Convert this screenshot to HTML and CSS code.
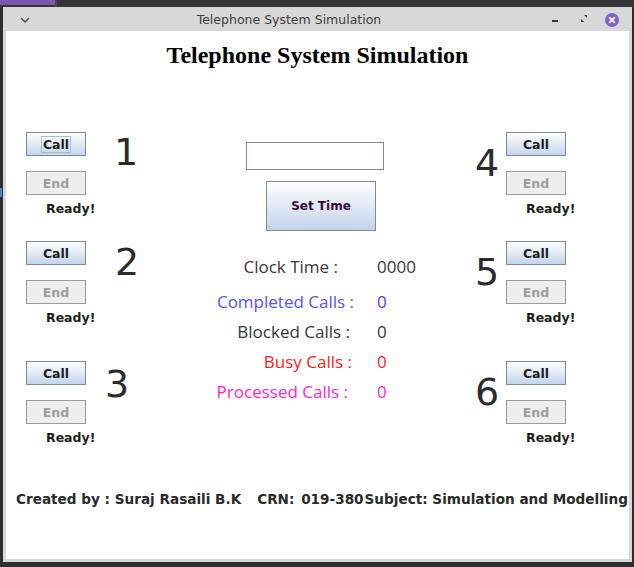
FILE: index.html
```html
<!DOCTYPE html>
<html>
<head>
<meta charset="utf-8">
<title>Telephone System Simulation</title>
<link rel="stylesheet" href="styles.css">
</head>
<body>
<div class="topbar"><div class="topbar-app"></div><div class="topbar-sep"></div></div>
<div class="desk">
  <div class="desk-edge"><div class="desk-icon"></div></div>
  <div class="window">
    <div class="titlebar">
      <div class="tb-menu">
        <svg width="10" height="6" viewBox="0 0 10 6"><path d="M1 1 L5 5 L9 1" fill="none" stroke="#4a4a4a" stroke-width="1.4"/></svg>
      </div>
      <div class="tb-title">Telephone System Simulation</div>
      <div class="tb-controls">
        <div class="tb-btn"><svg width="14" height="14" viewBox="0 0 14 14"><rect x="4" y="7" width="6" height="2" fill="#3a3a3a"/></svg></div>
        <div class="tb-btn tb-restore"><svg width="14" height="14" viewBox="0 0 14 14"><path d="M7 3 H10 V6 Z" fill="#3a3a3a"/><path d="M4 7 V10 H7 Z" fill="#3a3a3a"/></svg></div>
        <div class="tb-btn tb-close"><svg width="14" height="14" viewBox="0 0 14 14"><circle cx="7" cy="7" r="7" fill="#8062c8"/><path d="M4.6 4.6 L9.4 9.4 M9.4 4.6 L4.6 9.4" stroke="#fff" stroke-width="1.7" stroke-linecap="round"/></svg></div>
      </div>
    </div>
    <div class="content">
      <h1 class="heading">Telephone System Simulation</h1>
      <div class="main">
        <div class="col-left">
          <div class="phone">
            <div class="phone-btns">
              <div class="btn btn-call"><span class="focus">Call</span></div>
              <div class="btn btn-end">End</div>
              <div class="ready">Ready!</div>
            </div>
            <div class="num num-1">1</div>
          </div>
          <div class="phone phone-2">
            <div class="phone-btns">
              <div class="btn btn-call">Call</div>
              <div class="btn btn-end">End</div>
              <div class="ready">Ready!</div>
            </div>
            <div class="num num-2">2</div>
          </div>
          <div class="phone phone-3">
            <div class="phone-btns">
              <div class="btn btn-call">Call</div>
              <div class="btn btn-end">End</div>
              <div class="ready">Ready!</div>
            </div>
            <div class="num num-3">3</div>
          </div>
        </div>
        <div class="col-center">
          <div class="time-field"></div>
          <div class="btn-set">Set Time</div>
          <div class="stats">
            <div class="stat stat-clock"><span class="stat-label">Clock Time :</span><span class="stat-value">0000</span></div>
            <div class="stat stat-completed"><span class="stat-label">Completed Calls :</span><span class="stat-value">0</span></div>
            <div class="stat stat-blocked"><span class="stat-label">Blocked Calls :</span><span class="stat-value">0</span></div>
            <div class="stat stat-busy"><span class="stat-label">Busy Calls :</span><span class="stat-value">0</span></div>
            <div class="stat stat-processed"><span class="stat-label">Processed Calls :</span><span class="stat-value">0</span></div>
          </div>
        </div>
        <div class="col-right">
          <div class="phone">
            <div class="num num-r">4</div>
            <div class="phone-btns">
              <div class="btn btn-call">Call</div>
              <div class="btn btn-end">End</div>
              <div class="ready">Ready!</div>
            </div>
          </div>
          <div class="phone phone-2">
            <div class="num num-r">5</div>
            <div class="phone-btns">
              <div class="btn btn-call">Call</div>
              <div class="btn btn-end">End</div>
              <div class="ready">Ready!</div>
            </div>
          </div>
          <div class="phone phone-3">
            <div class="num num-r">6</div>
            <div class="phone-btns">
              <div class="btn btn-call">Call</div>
              <div class="btn btn-end">End</div>
              <div class="ready">Ready!</div>
            </div>
          </div>
        </div>
      </div>
      <div class="footer"><span class="f-created">Created by : Suraj Rasaili B.K</span><span class="f-crn">CRN: 019-380</span><span class="f-subject">Subject: Simulation and Modelling</span></div>
    </div>
  </div>
</div>
</body>
</html>
```
FILE: styles.css
```css
* { box-sizing: border-box; }
html, body { margin: 0; padding: 0; }
body {
  width: 634px;
  height: 567px;
  overflow: hidden;
  background: #2e2e2e;
  font-family: "DejaVu Sans", sans-serif;
}
.topbar { height: 7px; display: flex; background: #363636; }
.topbar-app { width: 55px; height: 5px; background: #7a5aa8; }
.topbar-sep { width: 2px; height: 7px; background: #4a4a4a; }
.desk { display: flex; height: 555px; }
.desk-edge { width: 3px; flex: none; }
.desk-icon { width: 2px; height: 9px; margin-top: 181px; background: #5287c4; }
.window {
  width: 629px;
  flex: none;
  display: flex;
  flex-direction: column;
  background: #d8d8d8;
}
.titlebar { height: 24px; display: flex; align-items: center; padding-top: 2px; flex: none; }
.tb-menu { width: 40px; padding-left: 17px; display: flex; align-items: center; }
.tb-menu svg { display: block; }
.tb-title { flex: 1; text-align: center; font-size: 12.5px; color: #3c3c3c; line-height: 14px; }
.tb-controls { width: 97px; display: flex; align-items: center; padding-left: 13px; }
.tb-btn { width: 14px; height: 14px; }
.tb-btn svg { display: block; }
.tb-restore { margin-left: 15px; margin-top: -2px; }
.tb-close { margin-left: 14px; }
.content {
  margin: 0 3px 3px;
  background: #fff;
  flex: 1;
  display: flex;
  flex-direction: column;
  overflow: hidden;
}
.heading {
  margin: 0;
  padding-top: 10px;
  line-height: 28px;
  font-family: "Liberation Serif", serif;
  font-weight: bold;
  font-size: 24px;
  text-align: center;
  color: #000;
}
.main { display: flex; margin-top: 63px; padding-left: 20px; }
.col-left { width: 120px; flex: none; }
.col-center { width: 329px; flex: none; }
.col-right { flex: none; }
.phone { display: flex; align-items: flex-start; }
.phone-2 { margin-top: 25px; }
.phone-3 { margin-top: 36px; }
.phone-btns { width: 60px; display: flex; flex-direction: column; flex: none; }
.btn {
  width: 60px;
  height: 24px;
  border: 1px solid #7a8a99;
  font-family: "DejaVu Sans", sans-serif;
  font-weight: bold;
  font-size: 12.5px;
  display: flex;
  align-items: center;
  justify-content: center;
}
.btn-call { background: linear-gradient(#ffffff, #c3d5ea); color: #1e1e1e; }
.focus { border: 1px solid #a6bdd4; padding: 1px 1px; line-height: 13px; }
.btn-end { margin-top: 15px; background: #eeeeee; border-color: #999999; color: #9c9c9c; }
.ready {
  margin-top: 6px;
  line-height: 15px;
  padding-left: 20px;
  font-weight: bold;
  font-size: 12.5px;
  color: #1c1c1c;
  white-space: nowrap;
}
.num {
  font-family: "DejaVu Sans", sans-serif;
  font-size: 38px;
  line-height: 38px;
  color: #2b2b2b;
}
.num-1 { margin-left: 28px; margin-top: 1px; }
.num-2 { margin-left: 29px; margin-top: 2px; }
.num-3 { margin-left: 19px; margin-top: 4px; }
.num-r { width: 24px; margin-right: 7px; margin-top: 12px; }
.time-field {
  margin-top: 10px;
  margin-left: 100px;
  width: 138px;
  height: 28px;
  border: 1px solid #7d8b98;
  background: #fff;
}
.btn-set {
  margin-top: 11px;
  margin-left: 120px;
  width: 110px;
  height: 50px;
  border: 1px solid #7a8a99;
  background: linear-gradient(#ffffff, #c2d4e9);
  display: flex;
  align-items: center;
  justify-content: center;
  font-weight: bold;
  font-size: 12px;
  color: #3a0838;
}
.stats { margin-top: 21px; margin-left: 58px; }
.stat {
  display: flex;
  height: 30px;
  line-height: 30px;
  font-family: "Open Sans", sans-serif;
  font-weight: 400;
  font-size: 17px;
  white-space: nowrap;
}
.stat-label { width: 150px; text-align: right; }
.stat-value { margin-left: 23px; }
.stat-clock { margin-bottom: 5px; color: #383838; }
.stat-clock .stat-label { padding-right: 16px; }
.stat-completed { color: #5252ff; }
.stat-completed .stat-value { color: #6030ff; }
.stat-blocked { color: #353535; }
.stat-blocked .stat-label { padding-right: 4px; }
.stat-busy { color: #ff1a1a; }
.stat-busy .stat-label { padding-right: 2px; }
.stat-processed { color: #ff1ed2; }
.stat-processed .stat-label { padding-right: 6px; }
.footer {
  margin-top: 45px;
  padding-left: 10px;
  font-weight: bold;
  font-size: 13.6px;
  line-height: 18px;
  color: #2a2a2a;
  white-space: nowrap;
}
.f-crn { margin-left: 16px; word-spacing: 2px; }
.f-subject { margin-left: 1px; }
```
